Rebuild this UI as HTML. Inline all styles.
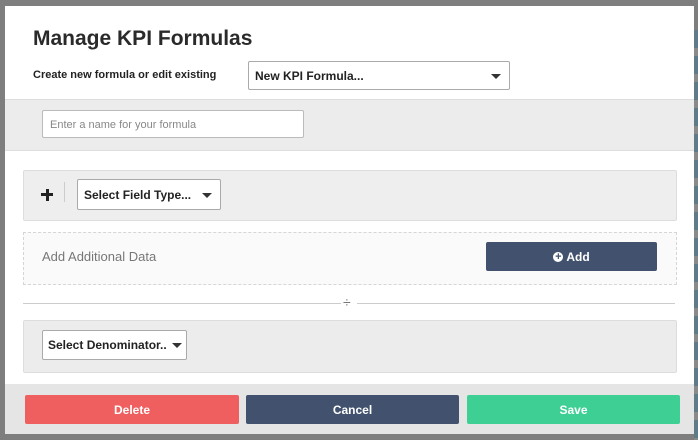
<!DOCTYPE html>
<html><head><style>
*{box-sizing:border-box;margin:0;padding:0}
body{width:698px;height:440px;background:#7e7e7e;font-family:"Liberation Sans",sans-serif;position:relative;overflow:hidden}
.a{position:absolute}
.modal{left:5px;top:6px;width:689px;height:428px;background:#fff;overflow:hidden}
.sel{background:#fff;border:1px solid #aaa;border-radius:2px;font-weight:bold;color:#222;font-size:12px;display:flex;align-items:center;padding-left:6px}
.caret{position:absolute;right:8px;top:50%;margin-top:-2px;border-left:5px solid transparent;border-right:5px solid transparent;border-top:5px solid #333}
.btn{color:#fff;font-size:12px;font-weight:bold;display:flex;align-items:center;justify-content:center;border-radius:2px}
</style></head><body>
<div class="a" style="left:694px;top:30px;width:4px;height:410px;background:repeating-linear-gradient(#5f7b88 0 18px,#8a8a8a 18px 26px)"></div>
<div class="a modal">
 <div class="a" style="left:28px;top:21px;font-size:21px;font-weight:bold;color:#2a2a2a">Manage KPI Formulas</div>
 <div class="a" style="left:28px;top:63px;font-size:11px;font-weight:bold;color:#222">Create new formula or edit existing</div>
 <div class="a sel" style="left:243px;top:55px;width:262px;height:29px">New KPI Formula...<span class="caret"></span></div>
 <div class="a" style="left:0;top:93px;width:689px;height:52px;background:#ececec;border-top:1px solid #ddd;border-bottom:1px solid #ddd"></div>
 <div class="a" style="left:37px;top:104px;width:262px;height:28px;background:#fff;border:1px solid #bbb;border-radius:2px;font-size:11px;color:#888;padding:8px 0 0 7px">Enter a name for your formula</div>
 <div class="a" style="left:18px;top:164px;width:654px;height:51px;background:#eee;border:1px solid #ddd;border-radius:2px"></div>
 <div class="a" style="left:36px;top:187px;width:12px;height:3px;background:#222"></div>
 <div class="a" style="left:40.5px;top:182.5px;width:3px;height:12px;background:#222"></div>
 <div class="a" style="left:59px;top:176px;width:1px;height:20px;background:#ccc"></div>
 <div class="a sel" style="left:72px;top:173px;width:144px;height:31px">Select Field Type...<span class="caret"></span></div>
 <div class="a" style="left:18px;top:226px;width:654px;height:53px;background:#fafafa;border:1px dashed #d6d6d6"></div>
 <div class="a" style="left:37px;top:243px;font-size:13px;color:#777">Add Additional Data</div>
 <div class="a btn" style="left:481px;top:236px;width:171px;height:29px;background:#42526e"><span style="display:inline-block;width:10px;height:10px;border-radius:50%;background:#fff;color:#42526e;font-size:11px;line-height:10px;text-align:center;margin-right:3px;font-weight:bold">+</span>Add</div>
 <div class="a" style="left:18px;top:297px;width:318px;height:1px;background:#ccc"></div>
 <div class="a" style="left:352px;top:297px;width:318px;height:1px;background:#ccc"></div>
 <div class="a" style="left:338px;top:288px;font-size:14px;color:#777">÷</div>
 <div class="a" style="left:18px;top:314px;width:654px;height:53px;background:#ececec;border:1px solid #ddd;border-radius:2px"></div>
 <div class="a sel" style="left:37px;top:324px;width:145px;height:30px;padding-left:5px">Select Denominator..<span class="caret" style="right:4px"></span></div>
 <div class="a" style="left:0;top:378px;width:689px;height:50px;background:#e5e5e5"></div>
 <div class="a btn" style="left:20px;top:389px;width:214px;height:29px;background:#ef5f5f">Delete</div>
 <div class="a btn" style="left:241px;top:389px;width:213px;height:29px;background:#42526e">Cancel</div>
 <div class="a btn" style="left:462px;top:389px;width:213px;height:29px;background:#3ecf95">Save</div>
</div>
</body></html>
